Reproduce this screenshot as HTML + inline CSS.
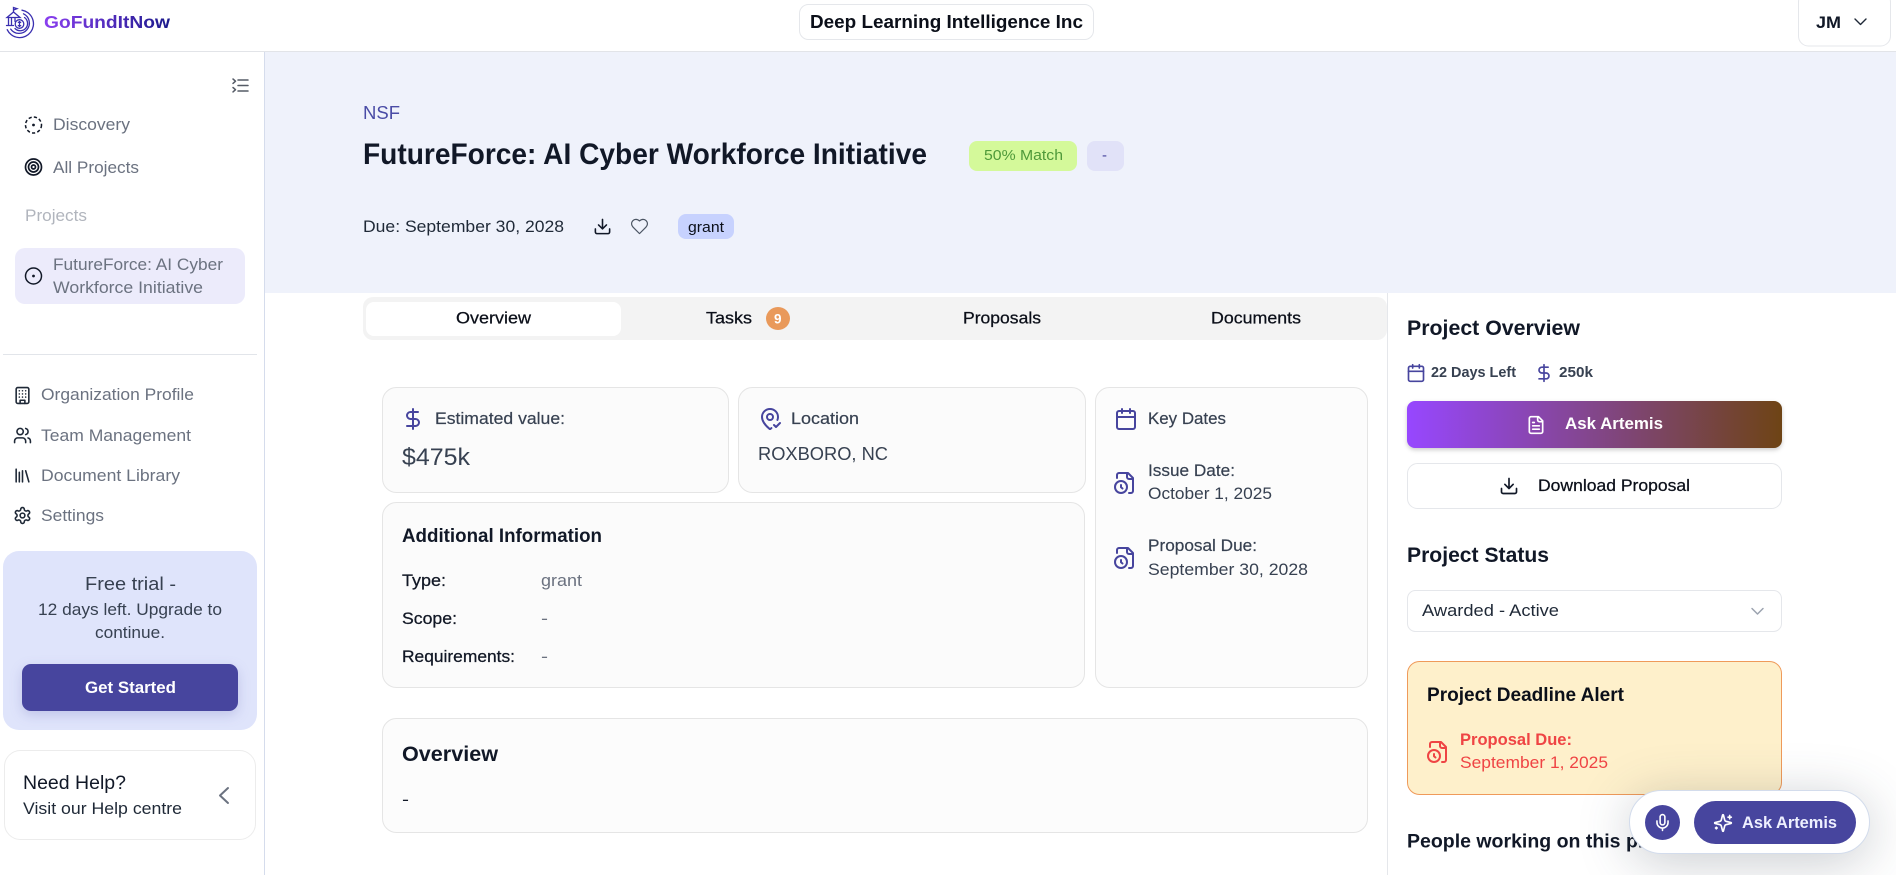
<!DOCTYPE html>
<html lang="en">
<head>
<meta charset="utf-8">
<title>FutureForce: AI Cyber Workforce Initiative</title>
<style>
html,body{margin:0;padding:0;background:#fff;width:1896px;height:875px;overflow:hidden}
svg{display:block}
text{font-family:"Liberation Sans",sans-serif;white-space:pre}
.i{fill:none;stroke-linecap:round;stroke-linejoin:round;stroke-width:2}
.b{font-weight:700}
.g{fill:#6b7280}
.d{fill:#374151;stroke:#374151;stroke-width:.2px}
.k{fill:#111827}
.m{stroke:#0b0f19;stroke-width:.25px}
.f{filter:drop-shadow(0 8px 26px rgba(30,41,59,.24))}
</style>
</head>
<body>
<svg width="1896" height="875" viewBox="0 0 1896 875" xmlns="http://www.w3.org/2000/svg">
<defs>
<linearGradient id="lg" x1="44" x2="170" y1="0" y2="0" gradientUnits="userSpaceOnUse"><stop offset="0" stop-color="#8b3ff0"/><stop offset="1" stop-color="#1b1a8c"/></linearGradient>
<linearGradient id="ask" x1="0" x2="1" y1="0" y2="0"><stop offset="0" stop-color="#9747ff"/><stop offset="1" stop-color="#6e4415"/></linearGradient>
</defs>

<!-- header -->
<rect x="0" y="51" width="1896" height="1" fill="#e2e4e8"/>
<g fill="none" stroke="#3a2fb0" stroke-width="1.300" stroke-linecap="round">
<path d="M22 10.200a13.800 13.800 0 1 1-14.800 19.500"/><path d="M23.500 13.800a10.300 10.300 0 1 1-12.800 15.300"/><path d="M24.500 17.500a7.300 7.300 0 1 1-9.500 11"/>
<circle cx="19.500" cy="24" r="4.300"/><path d="M18.300 22.300h2.400M18.300 25.700h2.400M19.500 21.500v5"/>
<path d="M7 17.500l6.500-5.500 6.500 5.500zM8.500 18.500v6M11.500 18.500v6M15 18.500v3M6.500 25.500h7"/><path d="M13.500 11.500V7.500l3.500 1.200-3.500 1.300"/>
</g>
<text x="44" y="28" font-size="17.500" class="b" fill="url(#lg)" textLength="126" lengthAdjust="spacingAndGlyphs">GoFundItNow</text>
<rect x="799.500" y="4.500" width="294" height="35" rx="9" fill="#fff" stroke="#e5e7eb"/>
<text x="810" y="28" font-size="18.500" class="b" fill="#0b0f19" textLength="273" lengthAdjust="spacingAndGlyphs">Deep Learning Intelligence Inc</text>
<rect x="1798.500" y="-8" width="92" height="54" rx="10" fill="#fff" stroke="#e5e7eb"/>
<text x="1816" y="28" font-size="16.500" class="b" fill="#111827" textLength="25" lengthAdjust="spacingAndGlyphs">JM</text>
<path d="M1855 19l5.500 5.500 5.500-5.500" fill="none" stroke="#1f2937" stroke-width="1.400" stroke-linecap="round" stroke-linejoin="round"/>

<!-- sidebar -->
<rect x="264" y="52" width="1" height="823" fill="#d5dcec"/>
<g fill="none" stroke="#555b66" stroke-width="1.500" stroke-linecap="round" stroke-linejoin="round">
<path d="M238 80h10M238 85.500h10M238 91h10M233 79l2.500 2.200-2.500 2.200M233 87.500l2.500 2.200-2.500 2.200"/>
</g>
<circle cx="33.500" cy="125" r="8" fill="none" stroke="#111827" stroke-width="1.500" stroke-dasharray="3.200 2.200"/>
<circle cx="33.500" cy="125" r="1.400" fill="#111827"/>
<text x="53" y="130" font-size="17" class="g" textLength="77" lengthAdjust="spacingAndGlyphs">Discovery</text>
<g fill="none" stroke="#111827" stroke-width="1.700"><circle cx="33.500" cy="167" r="8"/><circle cx="33.500" cy="167" r="5"/><circle cx="33.500" cy="167" r="2"/></g>
<text x="53" y="173" font-size="17" class="g" textLength="86" lengthAdjust="spacingAndGlyphs">All Projects</text>
<text x="25" y="221" font-size="17" fill="#b1b5bd" textLength="62" lengthAdjust="spacingAndGlyphs">Projects</text>
<rect x="15" y="248" width="230" height="56" rx="10" fill="#ecebfb"/>
<circle cx="33.500" cy="276" r="8" fill="none" stroke="#111827" stroke-width="1.500"/><circle cx="33.500" cy="276" r="1.400" fill="#111827"/>
<text x="53" y="270" font-size="17" class="g" textLength="170" lengthAdjust="spacingAndGlyphs">FutureForce: AI Cyber</text>
<text x="53" y="293" font-size="17" class="g" textLength="150" lengthAdjust="spacingAndGlyphs">Workforce Initiative</text>
<rect x="3" y="354" width="254" height="1" fill="#e2e5ea"/>

<svg x="13" y="386" width="19" height="19" viewBox="0 0 24 24" class="i" stroke="#1f2937"><rect x="4" y="2" width="16" height="20" rx="2"/><path d="M9 22v-4h6v4M8 6h.01M12 6h.01M16 6h.01M8 10h.01M12 10h.01M16 10h.01M8 14h.01M12 14h.01M16 14h.01"/></svg>
<text x="41" y="400" font-size="17" class="g" textLength="153" lengthAdjust="spacingAndGlyphs">Organization Profile</text>
<svg x="13" y="426" width="19" height="19" viewBox="0 0 24 24" class="i" stroke="#1f2937"><path d="M16 21v-2a4 4 0 0 0-4-4H6a4 4 0 0 0-4 4v2"/><circle cx="9" cy="7" r="4"/><path d="M22 21v-2a4 4 0 0 0-3-3.870M16 3.130a4 4 0 0 1 0 7.750"/></svg>
<text x="41" y="441" font-size="17" class="g" textLength="150" lengthAdjust="spacingAndGlyphs">Team Management</text>
<svg x="13" y="466" width="19" height="19" viewBox="0 0 24 24" class="i" stroke="#1f2937"><path d="m16 6 4 14M12 6v14M8 8v12M4 4v16"/></svg>
<text x="41" y="481" font-size="17" class="g" textLength="139" lengthAdjust="spacingAndGlyphs">Document Library</text>
<svg x="13" y="506" width="19" height="19" viewBox="0 0 24 24" class="i" stroke="#1f2937"><path d="M12.220 2h-.44a2 2 0 0 0-2 2v.18a2 2 0 0 1-1 1.730l-.43.25a2 2 0 0 1-2 0l-.15-.08a2 2 0 0 0-2.730.73l-.22.38a2 2 0 0 0 .73 2.730l.15.1a2 2 0 0 1 1 1.720v.51a2 2 0 0 1-1 1.740l-.15.09a2 2 0 0 0-.73 2.730l.22.38a2 2 0 0 0 2.730.73l.15-.08a2 2 0 0 1 2 0l.43.25a2 2 0 0 1 1 1.730V20a2 2 0 0 0 2 2h.44a2 2 0 0 0 2-2v-.18a2 2 0 0 1 1-1.730l.43-.25a2 2 0 0 1 2 0l.15.08a2 2 0 0 0 2.730-.73l.22-.39a2 2 0 0 0-.73-2.730l-.15-.08a2 2 0 0 1-1-1.740v-.5a2 2 0 0 1 1-1.740l.15-.09a2 2 0 0 0 .73-2.730l-.22-.38a2 2 0 0 0-2.730-.73l-.15.08a2 2 0 0 1-2 0l-.43-.25a2 2 0 0 1-1-1.730V4a2 2 0 0 0-2-2z"/><circle cx="12" cy="12" r="3"/></svg>
<text x="41" y="521" font-size="17" class="g" textLength="63" lengthAdjust="spacingAndGlyphs">Settings</text>

<rect x="3" y="551" width="254" height="179" rx="16" fill="#dfe4fb"/>
<text x="85" y="590" font-size="18.500" fill="#374151" textLength="91" lengthAdjust="spacingAndGlyphs">Free trial -</text>
<text x="38" y="615" font-size="17" fill="#374151" textLength="184" lengthAdjust="spacingAndGlyphs">12 days left. Upgrade to</text>
<text x="95" y="638" font-size="17" fill="#374151" textLength="70" lengthAdjust="spacingAndGlyphs">continue.</text>
<rect x="22" y="664" width="216" height="47" rx="9" fill="#47459e" style="filter:drop-shadow(0 4px 6px rgba(71,69,158,.2))"/>
<text x="85" y="693" font-size="16.500" class="b" fill="#fff" textLength="91" lengthAdjust="spacingAndGlyphs">Get Started</text>

<rect x="4.500" y="750.500" width="251" height="89" rx="16" fill="#fff" stroke="#ececec"/>
<text x="23" y="789" font-size="19.500" fill="#111827" textLength="103" lengthAdjust="spacingAndGlyphs">Need Help?</text>
<text x="23" y="814" font-size="17" fill="#1f2937" textLength="159" lengthAdjust="spacingAndGlyphs">Visit our Help centre</text>
<path d="M228 788l-8 7.500 8 7.500" fill="none" stroke="#6b7280" stroke-width="2" stroke-linecap="round" stroke-linejoin="round"/>

<!-- hero -->
<rect x="265" y="52" width="1631" height="241" fill="#eff2fb"/>
<text x="363" y="119" font-size="18.500" fill="#4a4ca6" textLength="37" lengthAdjust="spacingAndGlyphs">NSF</text>
<text x="363" y="164" font-size="29.500" class="b" fill="#111827" textLength="564" lengthAdjust="spacingAndGlyphs">FutureForce: AI Cyber Workforce Initiative</text>
<rect x="969" y="141" width="108" height="30" rx="8" fill="#d4f99a"/>
<text x="984" y="160" font-size="15" fill="#4f9a3a" textLength="79" lengthAdjust="spacingAndGlyphs">50% Match</text>
<rect x="1087" y="141" width="37" height="30" rx="8" fill="#e1e2f8"/>
<text x="1102" y="160" font-size="15" fill="#47459e">-</text>
<text x="363" y="232" font-size="17" fill="#1f2937" textLength="201" lengthAdjust="spacingAndGlyphs">Due: September 30, 2028</text>
<svg x="593" y="217" width="19" height="19" viewBox="0 0 24 24" class="i" stroke="#111827"><path d="M21 15v4a2 2 0 0 1-2 2H5a2 2 0 0 1-2-2v-4M7 10l5 5 5-5M12 15V3"/></svg>
<svg x="630" y="217" width="19" height="19" viewBox="0 0 24 24" class="i" stroke="#4b5563" style="stroke-width:1.500"><path d="M19 14c1.490-1.460 3-3.210 3-5.500A5.500 5.500 0 0 0 16.500 3c-1.760 0-3 .5-4.500 2-1.500-1.500-2.740-2-4.500-2A5.500 5.500 0 0 0 2 8.500c0 2.300 1.500 4.050 3 5.500l7 7Z"/></svg>
<rect x="678" y="214" width="56" height="25" rx="8" fill="#c7d2fe"/>
<text x="688" y="232" font-size="15" fill="#0b0f19" textLength="36" lengthAdjust="spacingAndGlyphs">grant</text>

<!-- tabs -->
<rect x="363" y="297" width="1024" height="43" rx="10" fill="#f3f3f3"/>
<rect x="366" y="302" width="255" height="34" rx="8" fill="#fff"/>
<text x="456" y="323.500" font-size="16.500" class="m" fill="#0b0f19" textLength="75" lengthAdjust="spacingAndGlyphs">Overview</text>
<text x="706" y="323.500" font-size="16.500" class="m" fill="#0b0f19" textLength="46" lengthAdjust="spacingAndGlyphs">Tasks</text>
<ellipse cx="778" cy="318.500" rx="12" ry="11.500" fill="#e9995a"/>
<text x="774" y="323.500" font-size="13.500" class="b" fill="#fff">9</text>
<text x="963" y="323.500" font-size="16.500" class="m" fill="#0b0f19" textLength="78" lengthAdjust="spacingAndGlyphs">Proposals</text>
<text x="1211" y="323.500" font-size="16.500" class="m" fill="#0b0f19" textLength="90" lengthAdjust="spacingAndGlyphs">Documents</text>
<rect x="1387" y="293" width="1" height="582" fill="#e5e7eb"/>

<!-- cards -->
<rect x="382.500" y="387.500" width="346" height="105" rx="14" fill="#fbfbfb" stroke="#e5e5e5"/>
<svg x="401" y="407" width="24" height="24" viewBox="0 0 24 24" class="i" stroke="#47459e"><path d="M12 2v20M17 5H9.500a3.500 3.500 0 0 0 0 7h5a3.500 3.500 0 0 1 0 7H6"/></svg>
<text x="435" y="424" font-size="17" class="d" textLength="130" lengthAdjust="spacingAndGlyphs">Estimated value:</text>
<text x="402" y="465" font-size="24.500" fill="#374151" textLength="68" lengthAdjust="spacingAndGlyphs">$475k</text>

<rect x="738.500" y="387.500" width="347" height="105" rx="14" fill="#fbfbfb" stroke="#e5e5e5"/>
<svg x="758" y="407" width="24" height="24" viewBox="0 0 24 24" class="i" stroke="#47459e"><path d="M19.430 12.935c.357-.967.57-1.955.57-2.935a8 8 0 0 0-16 0c0 4.993 5.539 10.193 7.399 11.799a1 1 0 0 0 1.202 0 32.197 32.197 0 0 0 .813-.728M16 18l2 2 4-4"/><circle cx="12" cy="10" r="3"/></svg>
<text x="791" y="424" font-size="17" class="d" textLength="68" lengthAdjust="spacingAndGlyphs">Location</text>
<text x="758" y="460" font-size="18.500" fill="#374151" textLength="130" lengthAdjust="spacingAndGlyphs">ROXBORO, NC</text>

<rect x="1095.500" y="387.500" width="272" height="300" rx="14" fill="#fcfcfc" stroke="#e5e5e5"/>
<svg x="1114" y="407" width="24" height="24" viewBox="0 0 24 24" class="i" stroke="#47459e"><path d="M8 2v4M16 2v4M3 10h18"/><rect x="3" y="4" width="18" height="18" rx="2"/></svg>
<text x="1148" y="424" font-size="17" class="d" textLength="78" lengthAdjust="spacingAndGlyphs">Key Dates</text>
<svg x="1113" y="471" width="24" height="24" viewBox="0 0 24 24" class="i" stroke="#47459e"><path d="M16 22h2a2 2 0 0 0 2-2V7l-5-5H6a2 2 0 0 0-2 2v3M14 2v4a2 2 0 0 0 2 2h4M9.500 17.500 8 16.250V14"/><circle cx="8" cy="16" r="6"/></svg>
<text x="1148" y="476" font-size="17" class="d" textLength="87" lengthAdjust="spacingAndGlyphs">Issue Date:</text>
<text x="1148" y="499" font-size="17" fill="#374151" textLength="124" lengthAdjust="spacingAndGlyphs">October 1, 2025</text>
<svg x="1113" y="546" width="24" height="24" viewBox="0 0 24 24" class="i" stroke="#47459e"><path d="M16 22h2a2 2 0 0 0 2-2V7l-5-5H6a2 2 0 0 0-2 2v3M14 2v4a2 2 0 0 0 2 2h4M9.500 17.500 8 16.250V14"/><circle cx="8" cy="16" r="6"/></svg>
<text x="1148" y="551" font-size="17" class="d" textLength="109" lengthAdjust="spacingAndGlyphs">Proposal Due:</text>
<text x="1148" y="575" font-size="17" fill="#374151" textLength="160" lengthAdjust="spacingAndGlyphs">September 30, 2028</text>

<rect x="382.500" y="502.500" width="702" height="185" rx="14" fill="#fbfbfb" stroke="#e5e5e5"/>
<text x="402" y="542" font-size="19" class="b k" textLength="200" lengthAdjust="spacingAndGlyphs">Additional Information</text>
<text x="402" y="586" font-size="17" class="k m" textLength="44" lengthAdjust="spacingAndGlyphs">Type:</text>
<text x="541" y="586" font-size="17" class="g" textLength="41" lengthAdjust="spacingAndGlyphs">grant</text>
<text x="402" y="624" font-size="17" class="k m" textLength="55" lengthAdjust="spacingAndGlyphs">Scope:</text>
<text x="541" y="624" font-size="17" class="g" textLength="7" lengthAdjust="spacingAndGlyphs">-</text>
<text x="402" y="662" font-size="17" class="k m" textLength="113" lengthAdjust="spacingAndGlyphs">Requirements:</text>
<text x="541" y="662" font-size="17" class="g" textLength="7" lengthAdjust="spacingAndGlyphs">-</text>

<rect x="382.500" y="718.500" width="985" height="114" rx="14" fill="#fcfcfc" stroke="#e5e5e5"/>
<text x="402" y="761" font-size="21" class="b k" textLength="96" lengthAdjust="spacingAndGlyphs">Overview</text>
<text x="402" y="805" font-size="17" class="k" textLength="7" lengthAdjust="spacingAndGlyphs">-</text>

<!-- right rail -->
<text x="1407" y="335" font-size="21" class="b k" textLength="173" lengthAdjust="spacingAndGlyphs">Project Overview</text>
<svg x="1406" y="363" width="20" height="20" viewBox="0 0 24 24" class="i" stroke="#47459e"><path d="M8 2v4M16 2v4M3 10h18"/><rect x="3" y="4" width="18" height="18" rx="2"/></svg>
<text x="1431" y="377" font-size="15" class="b" fill="#374151" textLength="85" lengthAdjust="spacingAndGlyphs">22 Days Left</text>
<svg x="1534" y="363" width="20" height="20" viewBox="0 0 24 24" class="i" stroke="#47459e"><path d="M12 2v20M17 5H9.500a3.500 3.500 0 0 0 0 7h5a3.500 3.500 0 0 1 0 7H6"/></svg>
<text x="1559" y="377" font-size="15" class="b" fill="#374151" textLength="34" lengthAdjust="spacingAndGlyphs">250k</text>
<rect x="1407" y="401" width="375" height="47" rx="8" fill="url(#ask)" style="filter:drop-shadow(0 2px 2px rgba(0,0,0,.2))"/>
<svg x="1526" y="415" width="20" height="20" viewBox="0 0 24 24" class="i" stroke="#fff"><path d="M15 2H6a2 2 0 0 0-2 2v16a2 2 0 0 0 2 2h12a2 2 0 0 0 2-2V7ZM14 2v4a2 2 0 0 0 2 2h4M10 9H8M16 13H8M16 17H8"/></svg>
<text x="1565" y="429" font-size="17" class="b" fill="#fff" textLength="98" lengthAdjust="spacingAndGlyphs">Ask Artemis</text>
<rect x="1407.500" y="463.500" width="374" height="45" rx="10" fill="#fff" stroke="#e5e7eb"/>
<svg x="1499" y="476" width="20" height="20" viewBox="0 0 24 24" class="i" stroke="#111827"><path d="M21 15v4a2 2 0 0 1-2 2H5a2 2 0 0 1-2-2v-4M7 10l5 5 5-5M12 15V3"/></svg>
<text x="1538" y="491" font-size="17" class="m" fill="#0b0f19" textLength="152" lengthAdjust="spacingAndGlyphs">Download Proposal</text>
<text x="1407" y="562" font-size="21" class="b k" textLength="142" lengthAdjust="spacingAndGlyphs">Project Status</text>
<rect x="1407.500" y="590.500" width="374" height="41" rx="8" fill="#fff" stroke="#e5e7eb"/>
<text x="1422" y="616" font-size="17" fill="#1f2937" textLength="137" lengthAdjust="spacingAndGlyphs">Awarded - Active</text>
<path d="M1752 608.500l5.500 5.500 5.500-5.500" fill="none" stroke="#9ca3af" stroke-width="1.500" stroke-linecap="round" stroke-linejoin="round"/>

<rect x="1407.500" y="661.500" width="374" height="133" rx="12" fill="#fef0cb" stroke="#ef9a5a"/>
<text x="1427" y="701" font-size="19" class="b" fill="#0b0f19" textLength="197" lengthAdjust="spacingAndGlyphs">Project Deadline Alert</text>
<svg x="1426" y="740" width="24" height="24" viewBox="0 0 24 24" class="i" stroke="#ef4444"><path d="M16 22h2a2 2 0 0 0 2-2V7l-5-5H6a2 2 0 0 0-2 2v3M14 2v4a2 2 0 0 0 2 2h4M9.500 17.500 8 16.250V14"/><circle cx="8" cy="16" r="6"/></svg>
<text x="1460" y="745" font-size="17" class="b" fill="#ef4444" textLength="112" lengthAdjust="spacingAndGlyphs">Proposal Due:</text>
<text x="1460" y="768" font-size="17" fill="#ef4444" textLength="148" lengthAdjust="spacingAndGlyphs">September 1, 2025</text>
<text x="1407" y="847.500" font-size="19.500" class="b k" textLength="284" lengthAdjust="spacingAndGlyphs">People working on this project</text>

<!-- floating assistant -->
<rect x="1629.500" y="790.500" width="240" height="63" rx="31.500" fill="#fff" stroke="#d3dcec" class="f"/>
<circle cx="1662.500" cy="822.500" r="17.500" fill="#47459e"/>
<svg x="1653" y="813" width="19" height="19" viewBox="0 0 24 24" class="i" stroke="#fff"><path d="M12 2a3 3 0 0 0-3 3v7a3 3 0 0 0 6 0V5a3 3 0 0 0-3-3ZM19 10v2a7 7 0 0 1-14 0v-2M12 19v3"/></svg>
<rect x="1694" y="801" width="162" height="43" rx="21.500" fill="#47459e"/>
<svg x="1713" y="813" width="20" height="20" viewBox="0 0 24 24" class="i" stroke="#fff"><path d="M9.937 15.500A2 2 0 0 0 8.500 14.063l-6.135-1.582a.5.5 0 0 1 0-.962L8.500 9.936A2 2 0 0 0 9.937 8.500l1.582-6.135a.5.5 0 0 1 .963 0L14.063 8.500A2 2 0 0 0 15.500 9.937l6.135 1.581a.5.5 0 0 1 0 .964L15.500 14.063a2 2 0 0 0-1.437 1.437l-1.582 6.135a.5.5 0 0 1-.963 0zM20 3v4M22 5h-4M4 17v2M5 18H3"/></svg>
<text x="1742" y="828" font-size="17" class="b" fill="#eef0ff" textLength="95" lengthAdjust="spacingAndGlyphs">Ask Artemis</text>
</svg>
</body>
</html>
